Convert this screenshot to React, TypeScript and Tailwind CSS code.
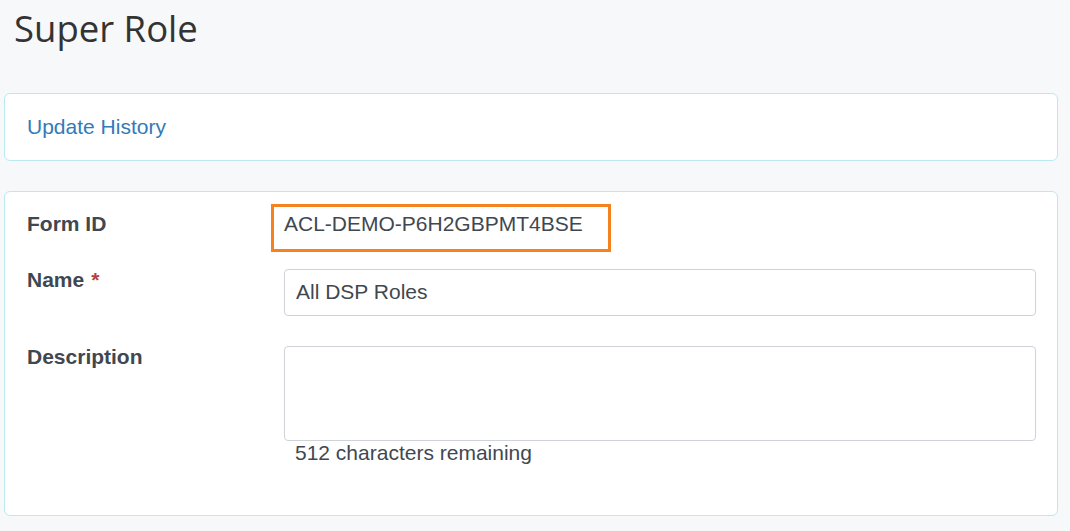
import React from "react";

export default function App() {
  const body = { fontFamily: '"Liberation Sans", Arial, sans-serif' };
  return (
    <div className="min-h-[531px] w-full bg-[#f7f8fa] pl-[4px] pr-[12px]" style={body}>
      <h1
        className="ml-[10px] pt-[3px] text-[36.5px] leading-[51px] font-normal text-[#333333]"
        style={{ fontFamily: '"Open Sans", "Noto Sans", sans-serif' }}
      >
        Super Role
      </h1>

      <div className="mt-[39px] rounded-[6px] border border-[#bce8f1] bg-white pl-[22px] pr-[22px] pt-[22px] pb-[22px]">
        <a className="block text-[21px] leading-[22px] text-[#337ab7]" href="#">
          Update History
        </a>
      </div>

      <div className="mt-[30px] rounded-[6px] border border-[#bce8f1] bg-white pl-[22px] pr-[21px] pt-[12px] pb-[51px] text-[21px] leading-[22px] text-[#3f4850]">
        <div className="flex">
          <div className="w-[257px] shrink-0 pt-[9px] font-bold">Form ID</div>
          <div className="flex-1">
            <div className="-ml-[13px] h-[48px] w-[340px] border-[3px] border-[#f5821f] pl-[10px] pt-[6px]">
              ACL-DEMO-P6H2GBPMT4BSE
            </div>
          </div>
        </div>

        <div className="mt-[17px] flex">
          <div className="w-[257px] shrink-0 font-bold">
            Name<span className="ml-[7px] text-[#b3413e]">*</span>
          </div>
          <div className="flex-1">
            <div className="flex h-[47px] items-center rounded-[4px] border border-[#cfd3d9] bg-white px-[11px] pb-[1px]">
              All DSP Roles
            </div>
          </div>
        </div>

        <div className="mt-[30px] flex">
          <div className="w-[257px] shrink-0 font-bold">Description</div>
          <div className="flex-1">
            <div className="h-[95px] rounded-[4px] border border-[#cfd3d9] bg-white"></div>
            <div className="mt-[1px] pl-[11px]">512 characters remaining</div>
          </div>
        </div>
      </div>
    </div>
  );
}
